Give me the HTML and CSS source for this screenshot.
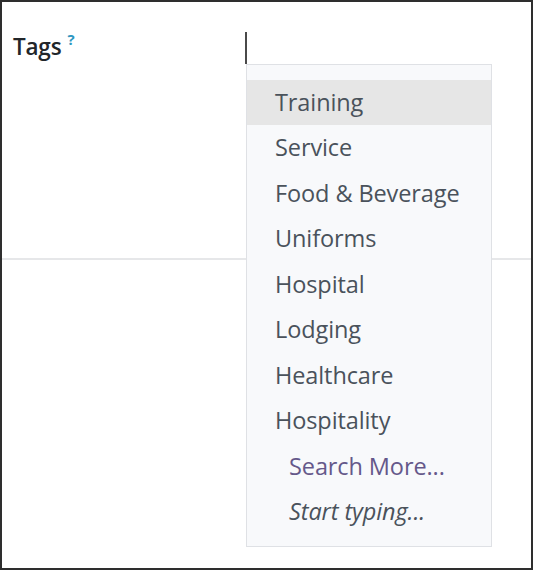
FILE: index.html
```html
<!DOCTYPE html>
<html lang="en">
<head>
<meta charset="utf-8">
<title>Tags</title>
<link rel="stylesheet" href="styles.css">
</head>
<body>
<div class="frame">
  <div class="field-row">
    <div class="label">Tags<sup class="help">?</sup></div>
    <div class="input-wrap">
      <span class="caret"></span>
      <ul class="dropdown">
        <li class="item active">Training</li>
        <li class="item">Service</li>
        <li class="item">Food &amp; Beverage</li>
        <li class="item">Uniforms</li>
        <li class="item">Hospital</li>
        <li class="item">Lodging</li>
        <li class="item">Healthcare</li>
        <li class="item">Hospitality</li>
        <li class="item link">Search More...</li>
        <li class="item hint">Start typing...</li>
      </ul>
    </div>
  </div>
  <div class="separator"></div>
</div>
</body>
</html>
```
FILE: styles.css
```css
* { box-sizing: border-box; }
html, body { margin: 0; padding: 0; }
body {
  width: 533px;
  height: 570px;
  background: #ffffff;
  font-family: "Open Sans", "Noto Sans", sans-serif;
  overflow: hidden;
}
.frame {
  width: 533px;
  height: 570px;
  border: 2px solid #2e2e2e;
  background: #ffffff;
  display: flex;
  flex-direction: column;
}
.field-row {
  display: flex;
  padding-top: 29px;
  height: 256px;
}
.label {
  width: 243px;
  padding-left: 11px;
  font-size: 22.5px;
  font-weight: 600;
  color: #22262a;
  line-height: 32px;
  letter-spacing: -0.2px;
}
.help {
  color: #2f97c1;
  font-size: 15px;
  font-weight: 700;
  margin-left: 6px;
  vertical-align: 0;
  position: relative;
  top: -10px;
}
.input-wrap {
  position: relative;
  flex: 1;
}
.caret {
  display: block;
  width: 2px;
  height: 32px;
  margin-top: 1px;
  background: #4a4a4a;
}
.dropdown {
  position: absolute;
  left: 1px;
  top: 33px;
  width: 246px;
  height: 483px;
  margin: 0;
  padding: 15px 0 0 0;
  list-style: none;
  background: #f8f9fb;
  border: 1px solid #dfe1e5;
  z-index: 2;
}
.item {
  height: 45.45px;
  line-height: 45px;
  padding-left: 28px;
  font-size: 23.5px;
  letter-spacing: -0.1px;
  color: #4a525b;
  white-space: nowrap;
}
.item.active { background: #e6e6e6; }
.item.link { padding-left: 42px; color: #65588a; }
.item.hint { padding-left: 42px; font-style: italic; color: #4a525b; }
.separator {
  height: 2px;
  background: #e6e7e9;
}
```
